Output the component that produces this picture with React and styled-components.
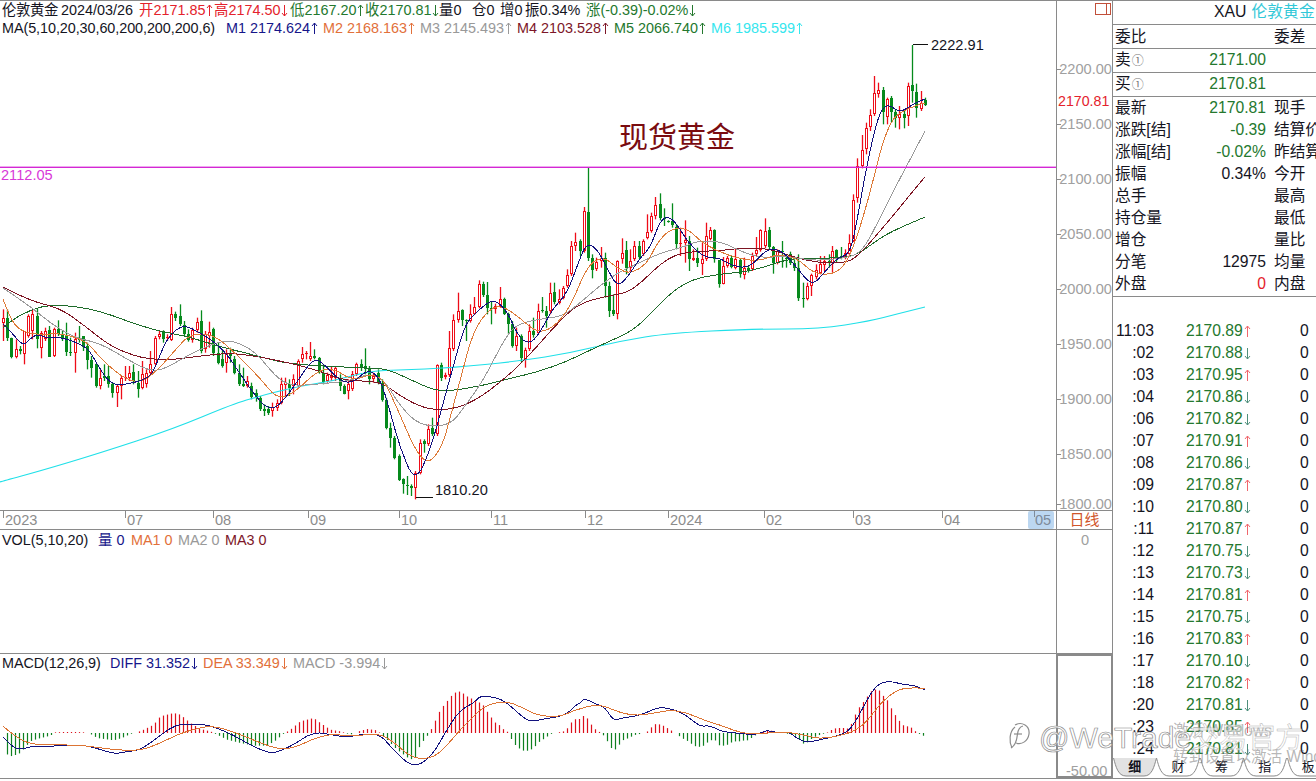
import styled, { createGlobalStyle } from 'styled-components';

const UI_FONT = '"Liberation Sans", "Noto Sans CJK SC", sans-serif';

const GlobalStyle = createGlobalStyle`
  html, body {
    margin: 0;
    padding: 0;
    background: #fff;
  }
  body {
    font-family: ${UI_FONT};
    overflow: hidden;
  }
`;

// ------------------------------
// chart data, read off the reference (x and y in px of the plot)
// ------------------------------
const fromZoom = (rows, ox, oy) =>
  rows.map(([X, c, hi, top, bot, lo]) => ({
    x: Math.round(ox + X / 3),
    c,
    hi: oy + hi / 3,
    top: oy + top / 3,
    bot: oy + bot / 3,
    lo: oy + lo / 3,
  }));

const CANDLES_LEFT = [
  [10, 'r', 115, 140, 155, 210], [22, 'g', 115, 140, 200, 210], [34, 'g', 200, 200, 258, 262], [49, 'r', 205, 235, 258, 262],
  [61, 'g', 225, 235, 240, 250], [73, 'r', 180, 180, 250, 280], [85, 'r', 130, 135, 195, 200], [97, 'r', 115, 128, 180, 205],
  [112, 'g', 112, 135, 203, 232], [124, 'r', 180, 185, 232, 262], [136, 'r', 170, 180, 205, 210], [148, 'g', 165, 178, 258, 258],
  [163, 'r', 170, 175, 255, 258], [175, 'g', 148, 175, 190, 195], [187, 'g', 178, 190, 200, 210], [199, 'g', 155, 195, 242, 255],
  [211, 'g', 200, 243, 247, 255], [226, 'r', 185, 205, 245, 305], [238, 'g', 165, 203, 207, 215], [250, 'g', 195, 195, 228, 240],
  [262, 'g', 215, 225, 268, 295], [274, 'g', 255, 268, 290, 320], [289, 'g', 278, 280, 345, 350], [301, 'r', 295, 320, 345, 355],
  [313, 'g', 280, 315, 320, 330], [325, 'g', 285, 315, 340, 350], [337, 'g', 335, 340, 365, 380], [352, 'r', 340, 345, 365, 408],
  [364, 'r', 315, 320, 345, 385], [376, 'r', 285, 318, 322, 330], [388, 'r', 285, 305, 320, 330], [400, 'g', 280, 303, 330, 340],
  [415, 'g', 300, 335, 355, 380], [427, 'r', 270, 308, 352, 355], [439, 'r', 295, 305, 340, 350], [451, 'r', 240, 280, 305, 310],
  [466, 'r', 195, 200, 280, 282], [478, 'r', 180, 188, 198, 205], [490, 'g', 178, 183, 205, 215], [502, 'r', 190, 197, 202, 210],
  [514, 'r', 108, 130, 208, 210], [526, 'g', 122, 130, 140, 150], [541, 'g', 100, 135, 160, 165], [553, 'g', 150, 162, 190, 195],
  [565, 'g', 175, 190, 208, 212], [577, 'r', 170, 178, 208, 215], [592, 'r', 140, 152, 178, 185], [604, 'g', 118, 150, 240, 247],
  [616, 'r', 180, 190, 235, 245], [628, 'r', 152, 183, 195, 230], [640, 'g', 170, 173, 245, 255], [655, 'g', 215, 245, 275, 280],
  [667, 'g', 235, 265, 285, 290], [679, 'r', 235, 250, 275, 305], [691, 'g', 230, 245, 255, 275], [703, 'g', 255, 265, 305, 310],
  [718, 'g', 280, 305, 340, 345], [730, 'g', 290, 340, 345, 348], [742, 'r', 315, 330, 345, 350], [754, 'g', 335, 345, 378, 385],
  [769, 'g', 355, 365, 380, 392], [781, 'g', 375, 380, 415, 420], [793, 'g', 400, 415, 420, 435], [805, 'g', 405, 415, 425, 432],
  [817, 'r', 395, 408, 420, 437], [832, 'r', 385, 395, 410, 420], [844, 'r', 320, 340, 395, 400], [856, 'r', 320, 332, 342, 380],
  [868, 'g', 325, 340, 350, 375], [880, 'r', 310, 325, 345, 370], [895, 'r', 265, 270, 345, 350], [907, 'r', 228, 250, 265, 275],
  [919, 'r', 240, 245, 250, 265], [931, 'r', 213, 255, 265, 270], [943, 'g', 235, 255, 260, 265], [958, 'g', 258, 262, 303, 308],
  [970, 'g', 280, 305, 333, 340], [982, 'r', 305, 312, 330, 335], [994, 'r', 285, 315, 322, 330], [1006, 'r', 285, 290, 322, 330],
  [1021, 'g', 310, 320, 345, 360], [1033, 'g', 340, 345, 368, 370], [1045, 'r', 325, 340, 360, 385], [1057, 'r', 300, 310, 355, 360],
  [1069, 'r', 275, 280, 310, 315], [1084, 'g', 265, 280, 290, 300], [1096, 'g', 232, 285, 295, 310], [1108, 'g', 285, 290, 325, 340],
  [1120, 'r', 305, 315, 325, 335], [1135, 'g', 295, 305, 335, 340], [1147, 'g', 325, 335, 388, 392], [1159, 'g', 380, 388, 470, 475],
  [1171, 'g', 455, 470, 500, 530], [1183, 'g', 495, 500, 560, 565], [1198, 'g', 550, 555, 628, 630], [1210, 'g', 622, 625, 640, 668],
  [1222, 'g', 615, 642, 645, 672], [1234, 'g', 640, 645, 650, 675], [1246, 'r', 600, 605, 650, 685], [1261, 'r', 505, 515, 605, 610],
  [1273, 'g', 505, 510, 518, 545], [1285, 'r', 460, 475, 520, 525], [1297, 'g', 440, 470, 490, 495], [1312, 'r', 280, 282, 490, 495],
  [1324, 'g', 275, 282, 322, 330], [1336, 'r', 305, 312, 318, 325], [1348, 'r', 180, 232, 312, 318],
];

const CANDLES_MIDDLE = [
  [100, 'r', 460, 478, 565, 570], [115, 'r', 395, 450, 478, 485], [127, 'g', 445, 448, 478, 495], [139, 'g', 475, 478, 481, 540],
  [151, 'r', 430, 458, 480, 485], [163, 'r', 408, 438, 458, 462], [178, 'r', 358, 370, 438, 442], [190, 'g', 362, 368, 402, 408],
  [202, 'g', 363, 402, 442, 460], [214, 'g', 420, 440, 445, 490], [226, 'r', 428, 435, 445, 458], [241, 'r', 378, 415, 435, 440],
  [253, 'g', 410, 413, 460, 462], [265, 'g', 455, 460, 490, 520], [277, 'g', 480, 490, 555, 560], [289, 'r', 500, 525, 555, 570],
  [304, 'g', 520, 525, 590, 605], [316, 'r', 560, 568, 598, 620], [328, 'r', 490, 510, 565, 570], [340, 'g', 470, 510, 522, 530],
  [355, 'r', 428, 450, 515, 520], [367, 'g', 408, 448, 451, 455], [379, 'g', 435, 450, 465, 500], [391, 'r', 365, 395, 450, 460],
  [403, 'g', 365, 392, 423, 430], [418, 'r', 385, 415, 425, 430], [430, 'r', 375, 380, 410, 415], [442, 'r', 325, 342, 375, 380],
  [454, 'r', 240, 255, 340, 345], [466, 'r', 215, 243, 255, 270], [481, 'g', 235, 240, 270, 285], [493, 'r', 138, 150, 270, 275],
  [505, 'g', 20, 153, 290, 300], [517, 'g', 280, 292, 328, 352], [529, 'r', 290, 303, 325, 330], [544, 'r', 258, 290, 300, 320],
  [556, 'g', 275, 290, 375, 410], [568, 'g', 362, 375, 450, 468], [580, 'g', 400, 448, 460, 465], [592, 'r', 298, 300, 458, 475],
  [607, 'r', 232, 275, 295, 308], [619, 'g', 240, 268, 320, 340], [631, 'r', 265, 300, 320, 330], [643, 'r', 240, 255, 295, 300],
  [658, 'g', 240, 255, 287, 295], [670, 'r', 235, 240, 280, 285], [682, 'r', 160, 212, 232, 235], [694, 'r', 155, 165, 210, 215],
  [706, 'r', 108, 132, 165, 175], [721, 'g', 97, 130, 172, 178], [733, 'g', 142, 170, 175, 195], [745, 'g', 178, 179, 181, 185],
  [757, 'g', 127, 180, 192, 200], [769, 'g', 190, 198, 250, 265], [781, 'r', 200, 245, 250, 285], [796, 'r', 178, 238, 245, 305],
  [808, 'g', 225, 240, 295, 330], [820, 'r', 265, 292, 298, 300], [832, 'g', 260, 292, 305, 318], [847, 'r', 245, 295, 310, 342],
  [859, 'r', 185, 225, 295, 300], [871, 'r', 198, 208, 233, 238], [883, 'g', 205, 208, 295, 305], [898, 'g', 298, 298, 368, 380],
  [910, 'r', 288, 315, 368, 370], [922, 'r', 285, 292, 315, 320], [934, 'g', 285, 290, 318, 322], [946, 'r', 262, 293, 320, 325],
  [961, 'g', 293, 296, 340, 350], [973, 'r', 290, 320, 342, 355], [985, 'g', 315, 320, 330, 335], [997, 'r', 275, 285, 325, 330],
  [1009, 'r', 228, 267, 278, 285], [1021, 'r', 205, 208, 268, 272], [1036, 'r', 172, 210, 255, 262], [1048, 'g', 198, 208, 258, 265],
  [1060, 'g', 255, 258, 305, 338], [1072, 'r', 265, 270, 305, 310], [1087, 'g', 240, 270, 273, 320], [1099, 'g', 280, 290, 295, 320],
  [1111, 'g', 272, 280, 305, 312], [1123, 'g', 295, 305, 322, 330], [1135, 'g', 300, 322, 410, 420],
];

const CANDLES_RIGHT = [
  [55, 'g', 640, 690, 770, 775], [70, 'g', 725, 770, 773, 800], [82, 'r', 725, 735, 775, 778], [94, 'r', 698, 703, 735, 765],
  [107, 'r', 670, 688, 708, 715], [120, 'r', 645, 670, 695, 700], [133, 'r', 645, 660, 672, 690], [146, 'g', 640, 660, 665, 680],
  [157, 'r', 615, 630, 665, 695], [169, 'g', 625, 628, 650, 665], [183, 'g', 618, 645, 650, 655], [196, 'r', 625, 635, 650, 655],
  [208, 'r', 580, 605, 640, 645], [220, 'r', 460, 478, 600, 603], [232, 'r', 352, 375, 470, 485], [247, 'r', 282, 328, 375, 382],
  [259, 'r', 245, 262, 325, 340], [271, 'r', 205, 222, 258, 270], [283, 'r', 105, 155, 220, 225], [295, 'r', 125, 148, 158, 170],
  [310, 'g', 138, 147, 212, 250], [322, 'r', 170, 175, 228, 250], [334, 'g', 165, 172, 212, 245], [346, 'g', 205, 212, 232, 260],
  [358, 'r', 195, 218, 232, 265], [373, 'g', 210, 218, 230, 262], [385, 'r', 125, 135, 225, 255], [397, 'g', 12, 132, 150, 185],
  [409, 'g', 128, 152, 200, 230], [424, 'r', 150, 185, 203, 210], [436, 'g', 170, 178, 193, 195],
];

const CANDLES = [
  ...fromZoom(CANDLES_LEFT, 0, 270),
  ...fromZoom(CANDLES_MIDDLE, 420, 160),
  ...fromZoom(CANDLES_RIGHT, 780, 40),
];

const MA_LINES = [
  {
    color: '#1fe0e8',
    pts: [[0, 481], [3, 480], [40, 470], [100, 452], [173, 428], [233, 403], [260, 395], [300, 385], [333, 380], [370, 370], [400, 369], [450, 367], [520, 360], [570, 352], [620, 340], [670, 332], [753, 328], [820, 328], [870, 320], [897, 313], [925, 306]],
    soft: true,
  },
  {
    color: '#1e6b2a',
    pts: [[3, 327], [13, 318], [33, 308], [50, 304], [73, 305], [100, 310], [127, 320], [157, 330], [187, 335], [217, 345], [250, 353], [283, 362], [320, 365], [367, 367], [387, 368], [407, 377], [433, 389], [450, 390], [480, 385], [500, 380], [553, 367], [603, 343], [633, 330], [653, 310], [673, 290], [693, 278], [720, 273], [753, 270], [787, 258], [813, 257], [847, 257], [863, 250], [880, 237], [897, 228], [925, 216]],
  },
  {
    color: '#7d1422',
    pts: [[3, 286], [30, 300], [60, 307], [85, 325], [110, 345], [135, 355], [150, 358], [170, 359], [200, 355], [230, 352], [255, 355], [290, 362], [320, 370], [345, 380], [380, 380], [400, 395], [425, 408], [450, 409], [475, 400], [502, 380], [527, 357], [553, 327], [577, 303], [607, 295], [627, 292], [643, 280], [660, 263], [677, 253], [697, 250], [720, 250], [740, 247], [767, 247], [797, 257], [820, 262], [847, 262], [860, 253], [880, 230], [897, 210], [913, 190], [925, 176]],
  },
  {
    color: '#9a9a9a',
    pts: [[3, 287], [30, 305], [50, 322], [75, 337], [100, 342], [130, 360], [150, 370], [165, 368], [190, 353], [215, 342], [232, 339], [255, 350], [275, 375], [290, 385], [320, 383], [350, 380], [370, 372], [385, 380], [400, 405], [420, 425], [450, 425], [465, 405], [483, 380], [507, 333], [520, 322], [547, 317], [563, 315], [580, 302], [597, 287], [617, 272], [637, 263], [660, 252], [687, 245], [697, 240], [720, 240], [740, 250], [760, 257], [787, 255], [813, 260], [847, 257], [863, 250], [880, 217], [897, 183], [913, 153], [925, 130]],
  },
  {
    color: '#dd7a38',
    pts: [[3, 298], [10, 317], [20, 330], [40, 334], [60, 332], [87, 340], [100, 357], [123, 377], [140, 382], [157, 370], [177, 347], [190, 333], [213, 333], [233, 350], [260, 377], [277, 398], [293, 393], [317, 370], [333, 367], [353, 380], [370, 373], [383, 377], [397, 407], [417, 453], [430, 463], [443, 443], [450, 417], [460, 380], [473, 330], [490, 307], [503, 305], [520, 317], [537, 332], [553, 327], [570, 307], [587, 265], [603, 255], [617, 267], [630, 273], [647, 263], [657, 242], [670, 228], [687, 227], [700, 240], [717, 250], [740, 258], [760, 260], [777, 253], [797, 257], [813, 272], [830, 274], [843, 267], [853, 247], [863, 217], [873, 180], [883, 140], [893, 117], [903, 110], [920, 103], [925, 102]],
  },
  {
    color: '#12127e',
    pts: [[3, 323], [13, 333], [23, 345], [30, 338], [37, 333], [47, 337], [58, 336], [73, 340], [88, 347], [97, 363], [110, 383], [125, 384], [150, 377], [157, 362], [167, 337], [183, 323], [200, 332], [213, 340], [227, 353], [240, 373], [257, 397], [267, 407], [277, 407], [293, 387], [313, 357], [323, 362], [340, 380], [353, 382], [368, 368], [380, 377], [390, 410], [400, 447], [415, 482], [430, 450], [443, 403], [450, 377], [463, 330], [470, 317], [487, 302], [495, 299], [507, 310], [517, 333], [527, 343], [537, 337], [553, 307], [567, 293], [580, 257], [587, 242], [597, 248], [605, 263], [617, 286], [627, 277], [640, 257], [650, 247], [660, 220], [668, 215], [677, 223], [687, 240], [700, 253], [710, 257], [720, 257], [732, 265], [750, 267], [767, 247], [783, 250], [797, 267], [812, 285], [823, 273], [837, 257], [850, 253], [857, 220], [867, 163], [878, 115], [887, 102], [900, 112], [913, 103], [925, 98]],
  },
];

const MACD_ZERO = 733;

const HIST_POINTS = [
  ...[[10, -60], [35, -70], [60, -60], [90, -25], [110, -18], [150, -8], [165, 2], [190, 3], [230, 3], [250, 2], [275, -5], [290, -15], [340, -22], [365, -15], [390, -3], [410, 2], [430, 10], [460, 25], [480, 50], [520, 60], [540, 55], [570, 30], [600, 12], [630, 5], [650, -5], [680, -20], [720, -30], [760, -38], [800, -38], [830, -20], [845, -5], [870, 10], [900, 35], [940, 45], [960, 30], [990, 10], [1020, 5], [1050, -5], [1075, 5], [1100, 12], [1130, 8], [1150, -10], [1190, -50], [1230, -80], [1245, -72], [1260, -35], [1280, -10], [1295, 15], [1320, 70], [1360, 120], [1380, 125], [1400, 110], [1440, 90]].map(([X, v]) => [X / 3, v / 3]),
  ...[[10, 82], [22, 62], [34, 45], [46, 30], [60, 22], [72, 8], [85, 2], [97, -28], [109, -40], [124, -52], [136, -54], [148, -52], [160, -45], [175, -28], [187, -20], [199, -12], [211, -3], [235, 2], [250, 5], [262, 15], [274, 33], [286, 42], [300, 42], [313, 55], [325, 38], [338, 17], [350, 7], [363, 0], [376, -15], [388, -38], [400, -55], [413, -40], [427, -22], [438, -18], [451, -12], [463, -6], [478, -3], [502, 5], [514, 18], [527, 28], [541, 25], [553, 20], [565, 12], [577, 5], [590, -3], [603, -15], [615, -20], [628, -28], [640, -38], [653, -42], [667, -40], [679, -30], [691, -22], [703, -20], [718, -38], [730, -38], [742, -35], [754, -28], [766, -25], [780, -25], [792, -22], [806, -22], [818, -10], [835, -3], [855, 8], [867, 10], [880, 3], [942, -5], [955, -18], [968, -32], [981, -28], [993, -18], [1007, -10], [1020, -5], [1045, 3], [1057, 12], [1070, 15], [1083, 15], [1095, 15], [1107, 12], [1120, 45], [1133, 72], [1147, 90], [1160, 108], [1172, 125], [1183, 130], [1195, 130], [1210, 110], [1222, 97], [1234, 72], [1246, 52], [1258, 35], [1272, 20], [1285, 20], [1297, 14], [1310, 0], [1323, -5], [1336, -12]].map(([X, v]) => [480 + X / 3, v / 3]),
];

const leftZoom = (rows) => rows.map(([X, Y]) => [X / 3, 650 + Y / 3]);
const rightZoom = (rows) => rows.map(([X, Y]) => [480 + X / 3, 670 + Y / 3]);

const DIFF_LINE = [
  ...leftZoom([[10, 262], [40, 295], [70, 298], [95, 288], [150, 290], [190, 285], [215, 288], [250, 285], [300, 298], [345, 312], [380, 305], [420, 300], [470, 265], [510, 235], [540, 222], [600, 222], [640, 230], [700, 255], [750, 285], [810, 310], [835, 305], [880, 285], [940, 245], [1000, 255], [1040, 262], [1090, 252], [1140, 252], [1180, 300], [1240, 355], [1295, 320], [1340, 240], [1380, 180], [1420, 160]]),
  ...rightZoom([[0, 78], [30, 80], [65, 88], [100, 115], [135, 148], [160, 154], [200, 145], [240, 140], [270, 125], [290, 103], [300, 100], [313, 85], [350, 103], [375, 112], [400, 152], [430, 143], [460, 140], [500, 128], [530, 113], [560, 113], [600, 125], [630, 145], [660, 170], [690, 166], [725, 185], [780, 190], [830, 195], [860, 180], [880, 187], [930, 187], [950, 205], [980, 218], [1040, 205], [1100, 190], [1130, 150], [1160, 90], [1190, 45], [1225, 32], [1275, 45], [1300, 45], [1335, 60]]),
];

const DEA_LINE = [
  ...leftZoom([[10, 230], [50, 262], [90, 282], [150, 285], [250, 285], [340, 300], [420, 302], [480, 280], [540, 250], [600, 233], [640, 228], [700, 245], [760, 270], [830, 297], [880, 295], [950, 262], [1000, 252], [1040, 258], [1090, 255], [1140, 252], [1180, 275], [1230, 320], [1280, 328], [1320, 310], [1380, 240], [1430, 190]]),
  ...rightZoom([[0, 120], [30, 102], [70, 95], [100, 100], [140, 120], [180, 138], [240, 140], [280, 122], [340, 105], [370, 107], [420, 128], [470, 137], [520, 130], [570, 120], [620, 128], [670, 150], [720, 165], [780, 188], [830, 193], [880, 187], [930, 187], [980, 197], [1020, 207], [1090, 195], [1130, 180], [1165, 150], [1200, 100], [1250, 60], [1290, 53], [1335, 55]]),
];

const smoothPath = (pts) => {
  let d = `M${pts[0][0]} ${pts[0][1]}`;
  for (let i = 1; i < pts.length - 1; i += 1) {
    const mx = (pts[i][0] + pts[i + 1][0]) / 2;
    const my = (pts[i][1] + pts[i + 1][1]) / 2;
    d += ` Q${pts[i][0].toFixed(1)} ${pts[i][1].toFixed(1)} ${mx.toFixed(1)} ${my.toFixed(1)}`;
  }
  const last = pts[pts.length - 1];
  return `${d} L${last[0]} ${last[1]}`;
};

const histAt = (x) => {
  for (let i = 0; i < HIST_POINTS.length - 1; i += 1) {
    const [x0, v0] = HIST_POINTS[i];
    const [x1, v1] = HIST_POINTS[i + 1];
    if (x >= x0 && x <= x1) return v0 + ((v1 - v0) * (x - x0)) / (x1 - x0);
  }
  return 0;
};

const HIST_BARS = Array.from({ length: 231 }, (_, i) => ({ x: 3 + i * 4, v: histAt(3 + i * 4) }));

const PRICE_TICKS = [
  ['2200.00', 68], ['2150.00', 123], ['2100.00', 178], ['2050.00', 233], ['2000.00', 288],
  ['1950.00', 343], ['1900.00', 398], ['1850.00', 453], ['1800.00', 503],
];

const TIME_TICKS = [
  ['2023', 3], ['07', 125], ['08', 213], ['09', 308], ['10', 399], ['11', 491], ['12', 585],
  ['2024', 668], ['02', 764], ['03', 853], ['04', 942],
];

const QUOTE_ROWS = [
  ['最新', '2170.81', 'green', '现手'],
  ['涨跌[结]', '-0.39', 'green', '结算价'],
  ['涨幅[结]', '-0.02%', 'green', '昨结算'],
  ['振幅', '0.34%', 'ink', '今开'],
  ['总手', '', 'ink', '最高'],
  ['持仓量', '', 'ink', '最低'],
  ['增仓', '', 'ink', '量比'],
  ['分笔', '12975', 'ink', '均量'],
  ['外盘', '0', 'red', '内盘'],
];

const TICKS = [
  ['11:03', '2170.89', 1], [':02', '2170.88', 0], [':03', '2170.95', 1], [':04', '2170.86', 0], [':06', '2170.82', 0],
  [':07', '2170.91', 1], [':08', '2170.86', 0], [':09', '2170.87', 1], [':10', '2170.80', 0], [':11', '2170.87', 1],
  [':12', '2170.75', 0], [':13', '2170.73', 0], [':14', '2170.81', 1], [':15', '2170.75', 0], [':16', '2170.83', 1],
  [':17', '2170.10', 0], [':18', '2170.82', 1], [':20', '2170.81', 0], [':23', '2170.85', 1], [':24', '2170.81', 0],
];

const TABS = ['细', '财', '筹', '指', '板'];

const COLORS = {
  ink: '#14141e',
  red: '#e4222c',
  green: '#24782e',
  navy: '#16168a',
  orange: '#e2703a',
  gray: '#999',
  maroon: '#7d1628',
  cyan: '#35e6ee',
  line: '#8a8a8a',
};

// ------------------------------
// layout
// ------------------------------
const Page = styled.div`
  position: relative;
  display: flex;
  width: 1316px;
  height: 781px;
  overflow: hidden;
  background: #fff;
  color: ${COLORS.ink};
`;

const ChartColumn = styled.div`
  display: flex;
  flex-direction: column;
  width: 1113px;
  height: 779px;
  box-sizing: border-box;
  border-bottom: 1px solid ${COLORS.line};
`;

const Pane = styled.div`
  display: flex;
  height: ${(p) => p.$height}px;
  border-top: ${(p) => (p.$ruled ? `1px solid ${COLORS.line}` : '0')};
  box-sizing: border-box;
`;

const Plot = styled.div`
  position: relative;
  width: 1056px;
  height: 100%;
  overflow: hidden;
`;

const PlotSvg = styled.svg`
  position: absolute;
  top: 0;
  left: 0;
  display: block;
`;

const Axis = styled.div`
  position: relative;
  width: 57px;
  height: 100%;
  box-sizing: border-box;
  border-left: 1px solid ${COLORS.line};
  border-right: 1px solid ${COLORS.line};
`;

const BoxedAxis = styled(Axis)`
  border: 2px solid ${COLORS.line};
`;

const PriceTick = styled.div`
  position: absolute;
  left: 0;
  right: 0;
  height: 16px;
  line-height: 16px;
  font-size: 14.6px;
  color: #a0a0a0;
  text-align: right;
  white-space: nowrap;
  &::before {
    content: '';
    position: absolute;
    left: 0;
    top: 8px;
    width: 4px;
    height: 1px;
    background: ${COLORS.line};
  }
`;

const LastPrice = styled.div`
  position: absolute;
  left: 1px;
  top: 92px;
  font-size: 14.2px;
  line-height: 16px;
  color: ${COLORS.red};
`;

const WindowToggle = styled.div`
  position: absolute;
  top: 2px;
  right: 1px;
  width: 16px;
  height: 12px;
  box-sizing: border-box;
  border: 1px solid #c2503a;
  &::after {
    content: '';
    position: absolute;
    top: 0;
    bottom: 0;
    right: 3px;
    width: 1px;
    background: #c2503a;
  }
`;

const LegendStack = styled.div`
  position: relative;
  padding-top: ${(p) => p.$top || 0}px;
`;

const Legend = styled.div`
  display: flex;
  align-items: center;
  height: 18px;
  padding-left: 2px;
  font-size: 14.4px;
  line-height: 18px;
  white-space: nowrap;
`;

const Item = styled.span`
  display: inline-block;
  flex: none;
  color: ${(p) => COLORS[p.$tone] || COLORS.ink};
  width: ${(p) => (p.$width ? `${p.$width}px` : 'auto')};
  letter-spacing: ${(p) => p.$tight || 0}px;
`;

const ArrowSvg = styled.svg`
  display: inline-block;
  vertical-align: -2px;
  margin-left: 1px;
`;

const ChartNote = styled.div`
  position: absolute;
  left: ${(p) => p.$x}px;
  top: ${(p) => p.$y}px;
  font-size: ${(p) => p.$size || 14.6}px;
  line-height: 1.15;
  color: ${(p) => p.$color || COLORS.ink};
  white-space: nowrap;
`;

const TimeRow = styled.div`
  display: flex;
  height: 20px;
  box-sizing: border-box;
  border-top: 1px solid ${COLORS.line};
  border-bottom: 1px solid ${COLORS.line};
`;

const TimeTrack = styled.div`
  position: relative;
  width: 1056px;
`;

const TimeLabel = styled.span`
  position: absolute;
  left: ${(p) => p.$x}px;
  top: 0;
  height: 18px;
  padding-left: 2px;
  font-size: 14.6px;
  line-height: 19px;
  color: #8c8c8c;
  &::before {
    content: '';
    position: absolute;
    left: 0;
    top: 0;
    width: 1px;
    height: 7px;
    background: ${COLORS.line};
  }
`;

const CurrentMonth = styled.span`
  position: absolute;
  left: 1028px;
  top: 0;
  width: 26px;
  height: 18px;
  box-sizing: border-box;
  padding-left: 7px;
  font-size: 14.6px;
  line-height: 19px;
  color: #7d8a9a;
  background: #bcd7f1;
  border-radius: 2px;
  &::before {
    content: '';
    position: absolute;
    left: 6px;
    top: 0;
    width: 1px;
    height: 6px;
    background: #7d8a9a;
  }
`;

const PeriodCell = styled.div`
  width: 57px;
  box-sizing: border-box;
  border-left: 1px solid ${COLORS.line};
  border-right: 1px solid ${COLORS.line};
  font-size: 15px;
  line-height: 18px;
  text-align: center;
  color: #d0552a;
`;

const Panel = styled.aside`
  display: flex;
  flex-direction: column;
  width: 203px;
  height: 779px;
  overflow: hidden;
  border-top: 1px solid ${COLORS.line};
  border-bottom: 1px solid ${COLORS.line};
  box-sizing: border-box;
`;

const PanelTitle = styled.div`
  height: 24px;
  box-sizing: border-box;
  padding-left: 101px;
  border-bottom: 1px solid ${COLORS.line};
  font-size: 15.8px;
  line-height: 22px;
  white-space: nowrap;
`;

const SymbolName = styled.span`
  margin-left: 5px;
  color: #32c8d8;
`;

const QuoteGrid = styled.div`
  display: grid;
  grid-template-columns: 151px 1fr;
  column-gap: 8px;
  padding-left: 2px;
  height: 24px;
  box-sizing: border-box;
  border-bottom: 1px solid ${COLORS.line};
  align-items: center;
  font-size: 15.7px;
  line-height: 20px;
  white-space: nowrap;
`;

const QuoteCell = styled.div`
  display: flex;
  justify-content: space-between;
  align-items: baseline;
  line-height: 20px;
`;

const Value = styled.span`
  color: ${(p) => COLORS[p.$tone] || COLORS.ink};
`;

const Level = styled.span`
  font-size: 12px;
  margin-left: 1px;
  color: #777;
`;

const QuoteBlock = styled.div`
  display: flex;
  flex-direction: column;
  margin-top: -1px;
  padding: 1px 0;
  border-bottom: 1px solid ${COLORS.line};
`;

const QuoteRow = styled.div`
  display: grid;
  grid-template-columns: 151px 1fr;
  column-gap: 8px;
  padding-left: 2px;
  height: 22px;
  align-items: center;
  font-size: 15.7px;
  line-height: 20px;
  white-space: nowrap;
`;

const TickList = styled.div`
  display: flex;
  flex-direction: column;
  padding-top: 23px;
`;

const TickRow = styled.div`
  display: grid;
  grid-template-columns: 41px 32px 64px 1fr;
  height: 22px;
  align-items: center;
  font-size: 15.7px;
  line-height: 20px;
  white-space: nowrap;
`;

const TickTime = styled.span`
  justify-self: end;
`;

const TickPrice = styled.span`
  grid-column: 3;
  color: ${COLORS.green};
`;

const TickArrow = styled.span`
  color: ${(p) => (p.$up ? '#f0666c' : '#4f8f7c')};
`;

const TickVolume = styled.span`
  grid-column: 4;
  padding-left: 50px;
`;

const Tabs = styled.div`
  position: relative;
  display: flex;
  flex: none;
  height: 19px;
  margin-top: -2px;
`;

const Tab = styled.div`
  position: relative;
  width: 43.4px;
  flex: none;
  height: 19px;
  font-size: 13px;
  line-height: 18px;
  text-align: center;
  font-weight: ${(p) => (p.$active ? 700 : 400)};
  & > span {
    position: relative;
  }
`;

const TabShape = styled.svg`
  position: absolute;
  left: 0;
  top: 0;
`;

const Watermark = styled.div`
  position: absolute;
  left: 1007px;
  top: 720px;
  display: flex;
  align-items: center;
  gap: 8px;
  height: 32px;
  white-space: nowrap;
  font-size: 30px;
  color: rgba(255, 255, 255, 0.85);
  -webkit-text-stroke: 0.7px #8c8c8c;
`;

const WatermarkName = styled.span`
  font-size: 28px;
  color: rgba(255, 255, 255, 0.6);
  -webkit-text-stroke: 0.5px #b4b4b4;
`;

const ActivationNote = styled.div`
  position: absolute;
  left: 1173px;
  top: 718px;
  font-size: 15.6px;
  line-height: 26px;
  white-space: nowrap;
  color: rgba(120, 120, 120, 0.55);
`;

// ------------------------------
// drawings
// ------------------------------
function Arrow({ down }) {
  return (
    <ArrowSvg width="7" height="13" viewBox="0 0 7 13" fill="none" stroke="currentColor" strokeWidth="1">
      {down ? <path d="M3.5 1 V12 M1 9 L3.5 12 L6 9" /> : <path d="M3.5 12 V1 M1 4 L3.5 1 L6 4" />}
    </ArrowSvg>
  );
}

function PriceChart() {
  return (
    <PlotSvg width="1056" height="510">
      {CANDLES.map((k) => {
        const tone = k.c === 'r' ? '#ee0c18' : '#068a1c';
        const h = Math.max(1, k.bot - k.top);
        return (
          <g key={`${k.x}-${k.top}`}>
            <rect x={k.x - 0.15} y={k.hi} width="1.3" height={k.lo - k.hi} fill={tone} />
            <g shapeRendering="crispEdges">
              <rect x={k.x - 1} y={k.top} width="3" height={h} fill={tone} />
              {k.c === 'r' && h > 2 && (
                <rect x={k.x} y={k.top + 1} width="1" height={h - 2} fill="#fff" />
              )}
            </g>
          </g>
        );
      })}
      {MA_LINES.map((line) => (
        <path
          key={line.color}
          d={smoothPath(line.pts)}
          fill="none"
          stroke={line.color}
          strokeWidth={line.soft ? 1.2 : 1}
          shapeRendering={line.soft ? 'auto' : 'crispEdges'}
        />
      ))}
      <rect x="0" y="165.6" width="1056" height="1.4" fill="#d428d4" />
      <g shapeRendering="crispEdges">
        <rect x="913" y="43" width="15" height="1" fill="#111" />
        <rect x="416" y="496" width="17" height="1" fill="#111" />
      </g>
    </PlotSvg>
  );
}

function MacdChart() {
  return (
    <PlotSvg width="1056" height="124" viewBox="0 654 1056 124">
      {HIST_BARS.map((b) =>
        Math.abs(b.v) < 0.5 ? null : (
          <rect
            key={b.x}
            x={b.x - 0.1}
            y={b.v > 0 ? MACD_ZERO - b.v : MACD_ZERO}
            width="1.2"
            height={Math.abs(b.v)}
            fill={b.v > 0 ? '#dc101c' : '#0e8020'}
          />
        )
      )}
      <path d={smoothPath(DIFF_LINE)} fill="none" stroke="#12127e" strokeWidth="1" shapeRendering="crispEdges" />
      <path d={smoothPath(DEA_LINE)} fill="none" stroke="#dc7434" strokeWidth="1" shapeRendering="crispEdges" />
    </PlotSvg>
  );
}

function WeiboMark() {
  return (
    <svg width="24" height="30" viewBox="0 0 24 30" fill="none" stroke="#8c8c8c" strokeWidth="1.2">
      <path d="M8 4 C15 0 23 5 22 13 C21 20 15 24 9 22" />
      <path d="M5 27 C2 21 2 11 8 6" />
      <path d="M16 5 C12 6 11 9 10.5 13 C10 18 9 24 4 27" />
      <path d="M7 13 L15 13" />
    </svg>
  );
}

// ------------------------------
// the page
// ------------------------------
function App() {
  return (
    <Page>
      <GlobalStyle />
      <ChartColumn>
        <Pane $height={510} $ruled>
          <Plot>
            <PriceChart />
            <LegendStack>
              <Legend>
                <Item $width={59} $tight={-0.4}>伦敦黄金</Item>
                <Item $width={78}>2024/03/26</Item>
                <Item $tone="red" $width={75}>开2171.85<Arrow /></Item>
                <Item $tone="red" $width={76}>高2174.50<Arrow down /></Item>
                <Item $tone="green" $width={75}>低2167.20<Arrow /></Item>
                <Item $tone="green" $width={74}>收2170.81<Arrow down /></Item>
                <Item $width={33}>量0</Item>
                <Item $width={28}>仓0</Item>
                <Item $width={25}>增0</Item>
                <Item $width={61}>振0.34%</Item>
                <Item $tone="green">涨(-0.39)-0.02%<Arrow down /></Item>
              </Legend>
              <Legend>
                <Item $width={224} $tight={-0.07}>MA(5,10,20,30,60,200,200,200,6)</Item>
                <Item $tone="navy" $width={97}>M1 2174.624<Arrow /></Item>
                <Item $tone="orange" $width={97}>M2 2168.163<Arrow /></Item>
                <Item $tone="gray" $width={97}>M3 2145.493<Arrow /></Item>
                <Item $tone="maroon" $width={97}>M4 2103.528<Arrow /></Item>
                <Item $tone="green" $width={97}>M5 2066.740<Arrow /></Item>
                <Item $tone="cyan" $width={97}>M6 1985.599<Arrow /></Item>
              </Legend>
            </LegendStack>
            <ChartNote $x={619} $y={121} $size={29} $color="#7a0c10">现货黄金</ChartNote>
            <ChartNote $x={1} $y={166} $color="#d838d8">2112.05</ChartNote>
            <ChartNote $x={931} $y={36}>2222.91</ChartNote>
            <ChartNote $x={435} $y={481}>1810.20</ChartNote>
          </Plot>
          <Axis>
            <WindowToggle />
            <LastPrice>2170.81</LastPrice>
            {PRICE_TICKS.map(([label, y]) => (
              <PriceTick key={label} style={{ top: y - 8 }}>{label}</PriceTick>
            ))}
          </Axis>
        </Pane>
        <TimeRow>
          <TimeTrack>
            {TIME_TICKS.map(([label, x]) => (
              <TimeLabel key={label} $x={x}>{label}</TimeLabel>
            ))}
            <CurrentMonth>05</CurrentMonth>
          </TimeTrack>
          <PeriodCell>日线</PeriodCell>
        </TimeRow>
        <Pane $height={123}>
          <Plot>
            <LegendStack $top={1}>
              <Legend>
                <Item $width={96}>VOL(5,10,20)</Item>
                <Item $tone="navy" $width={33}>量 0</Item>
                <Item $tone="orange" $width={47}>MA1 0</Item>
                <Item $tone="gray" $width={47}>MA2 0</Item>
                <Item $tone="maroon">MA3 0</Item>
              </Legend>
            </LegendStack>
          </Plot>
          <Axis>
            <ChartNote $x={24} $y={2} $color="#a0a0a0">0</ChartNote>
          </Axis>
        </Pane>
        <Pane $height={125} $ruled>
          <Plot>
            <MacdChart />
            <LegendStack>
              <Legend>
                <Item $width={108} $tight={-0.1}>MACD(12,26,9)</Item>
                <Item $tone="navy" $width={93}>DIFF 31.352<Arrow down /></Item>
                <Item $tone="orange" $width={90}>DEA 33.349<Arrow down /></Item>
                <Item $tone="gray">MACD -3.994<Arrow down /></Item>
              </Legend>
            </LegendStack>
          </Plot>
          <BoxedAxis>
            <ChartNote $x={8} $y={107} $color="#a0a0a0">-50.00</ChartNote>
          </BoxedAxis>
        </Pane>
      </ChartColumn>

      <Panel>
        <PanelTitle>
          XAU<SymbolName>伦敦黄金</SymbolName>
        </PanelTitle>
        <QuoteGrid>
          <span>委比</span>
          <span>委差</span>
        </QuoteGrid>
        <QuoteGrid>
          <QuoteCell>
            <span>卖<Level>①</Level></span>
            <Value $tone="green">2171.00</Value>
          </QuoteCell>
        </QuoteGrid>
        <QuoteGrid>
          <QuoteCell>
            <span>买<Level>①</Level></span>
            <Value $tone="green">2170.81</Value>
          </QuoteCell>
        </QuoteGrid>
        <QuoteBlock>
          {QUOTE_ROWS.map(([label, value, tone, other]) => (
            <QuoteRow key={label}>
              <QuoteCell>
                <span>{label}</span>
                <Value $tone={tone}>{value}</Value>
              </QuoteCell>
              <span>{other}</span>
            </QuoteRow>
          ))}
        </QuoteBlock>
        <TickList>
          {TICKS.map(([time, price, up], i) => (
            <TickRow key={`${time}-${i}`}>
              <TickTime>{time}</TickTime>
              <TickPrice>
                {price}
                <TickArrow $up={up}><Arrow down={!up} /></TickArrow>
              </TickPrice>
              <TickVolume>0</TickVolume>
            </TickRow>
          ))}
        </TickList>
        <Tabs>
          {TABS.map((tab, i) => (
            <Tab key={tab} $active={i === 0}>
              <TabShape width="44" height="19" viewBox="0 0 44 19">
                <path
                  d="M0.5 0 C3 9 5 18 13 18 L31 18 C39 18 41 9 43.5 0"
                  fill={i === 0 ? '#e2e2e2' : '#fff'}
                  stroke="#8a8a8a"
                />
              </TabShape>
              <span>{tab}</span>
            </Tab>
          ))}
        </Tabs>
      </Panel>

      <ActivationNote>
        激活 Windows
        <br />
        转到设置以激活 Windows。
      </ActivationNote>
      <Watermark>
        <WeiboMark />
        <span>
          @WeTrade<WatermarkName>交易官方</WatermarkName>
        </span>
      </Watermark>
    </Page>
  );
}

export default App;
